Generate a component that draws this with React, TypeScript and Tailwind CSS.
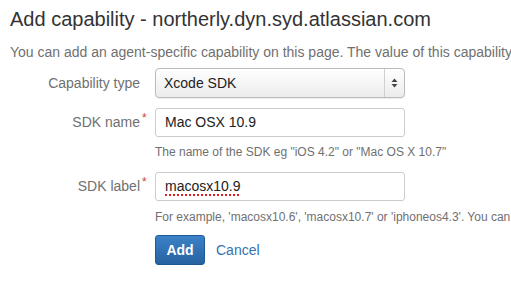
import React from 'react';

function Label({ text, required }: { text: string; required?: boolean }) {
  return (
    <div className="flex w-[155px] shrink-0 items-center">
      <span className="w-[140px] text-right text-[14px] text-[#707070]">{text}</span>
      {required && <span className="-mt-[10px] pl-[2px] text-[12px] text-[#d04437]">*</span>}
    </div>
  );
}

export default function App() {
  return (
    <div className="min-h-[294px] overflow-hidden bg-white pt-[5px] font-['Liberation_Sans',Arial,sans-serif] text-[#333]">
      <h1 className="pl-[10px] text-[20px] leading-[28px] text-[#333]">
        Add capability - northerly.dyn.syd.atlassian.com
      </h1>
      <p className="mt-[9px] whitespace-nowrap pl-[10px] text-[14px] leading-[20px] text-[#707070]">
        You can add an agent-specific capability on this page. The value of this capability
      </p>

      <form className="mt-[6px] flex flex-col" onSubmit={(e) => e.preventDefault()}>
        <div className="flex h-[30px] items-center">
          <Label text="Capability type" />
          <div className="flex h-[30px] w-[250px] items-center rounded-[4px] border border-[#bbb] bg-gradient-to-b from-white to-[#ececec] shadow-[0_1px_1px_rgba(0,0,0,0.08)]">
            <span className="flex-1 pl-[8px] text-[14px] text-[#222]">Xcode SDK</span>
            <div className="flex h-full w-[20px] flex-col items-center justify-center border-l border-[#d0d0d0]">
              <svg width="7" height="10" viewBox="0 0 7 10">
                <path d="M3.5 0.5 L6.5 4 L0.5 4 Z" fill="#444" />
                <path d="M3.5 9.5 L6.5 6 L0.5 6 Z" fill="#444" />
              </svg>
            </div>
          </div>
        </div>

        <div className="mt-[10px] flex h-[29px] items-center">
          <Label text="SDK name" required />
          <div className="flex h-[29px] w-[250px] items-center rounded-[3px] border border-[#ccc] bg-white pl-[9px] text-[14px] text-[#222]">
            Mac OSX 10.9
          </div>
        </div>
        <div className="ml-[155px] mt-[7px] text-[12px] leading-[16px] text-[#707070]">
          The name of the SDK eg "iOS 4.2" or "Mac OS X 10.7"
        </div>

        <div className="mt-[12px] flex h-[29px] items-center">
          <Label text="SDK label" required />
          <div className="flex h-[29px] w-[250px] items-center rounded-[3px] border border-[#ccc] bg-white pl-[9px] text-[14px] text-[#222]">
            <span className="underline decoration-[#e02020] decoration-dotted decoration-2 underline-offset-[3px]">macosx10.9</span>
          </div>
        </div>
        <div className="ml-[155px] mt-[8px] whitespace-nowrap text-[12px] leading-[16px] text-[#707070]">
          For example, 'macosx10.6', 'macosx10.7' or 'iphoneos4.3'. You can
        </div>

        <div className="ml-[155px] mt-[10px] flex items-center gap-[11px]">
          <button
            type="submit"
            className="h-[30px] w-[50px] rounded-[3px] border border-[#1f5a96] bg-gradient-to-b from-[#3b82c8] to-[#2762a0] text-[14px] font-bold text-white"
          >
            Add
          </button>
          <a className="text-[14px] text-[#3572b0]" href="#">
            Cancel
          </a>
        </div>
      </form>
    </div>
  );
}
